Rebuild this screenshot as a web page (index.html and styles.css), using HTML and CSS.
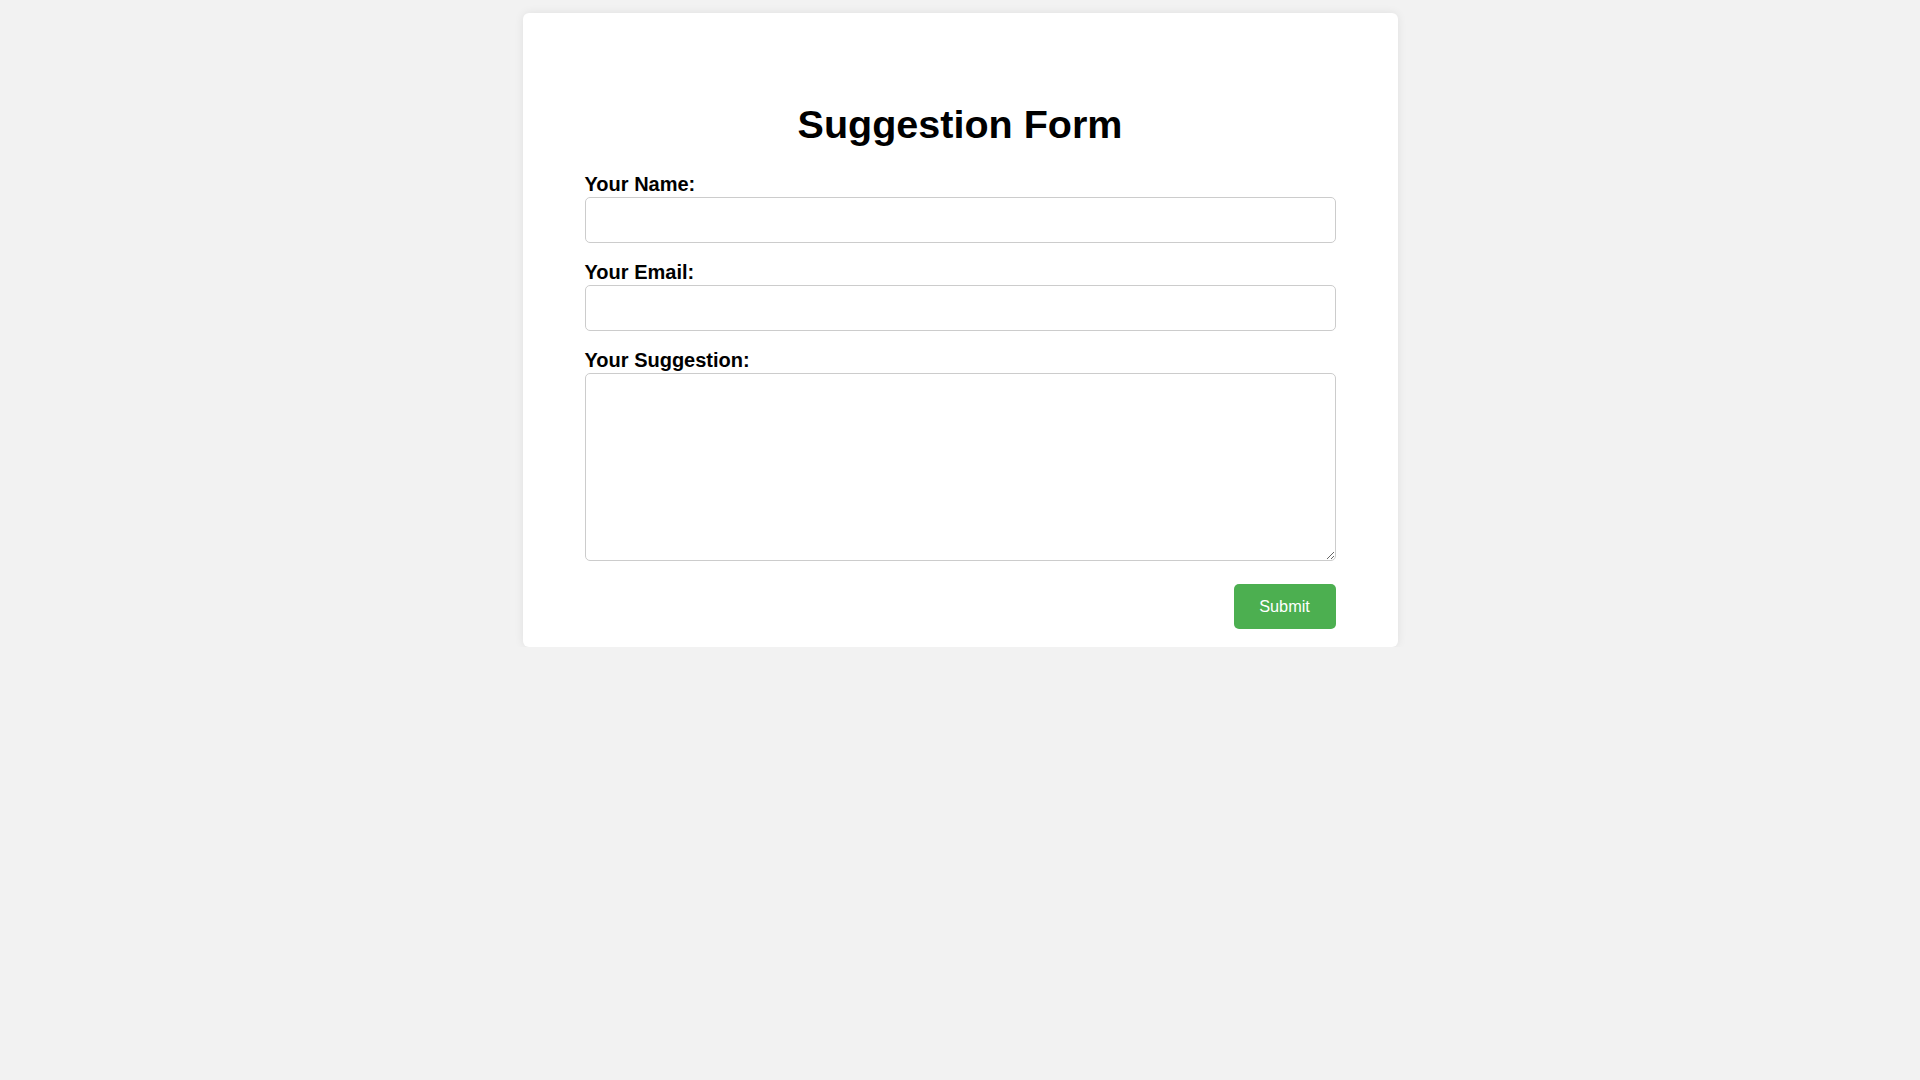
FILE: index.html
```html
<!DOCTYPE html>
<html lang="en">
<head>
<meta charset="utf-8">
<title>Suggestion Form</title>
<link rel="stylesheet" href="styles.css">
</head>
<body>
<div class="card">
  <h1 class="title">Suggestion Form</h1>
  <form class="form">
    <label class="label" for="name">Your Name:</label>
    <input class="field" type="text" id="name">
    <label class="label gap" for="email">Your Email:</label>
    <input class="field" type="email" id="email">
    <label class="label gap" for="suggestion">Your Suggestion:</label>
    <textarea class="area" id="suggestion"></textarea>
    <div class="actions">
      <button class="submit" type="button">Submit</button>
    </div>
  </form>
</div>
</body>
</html>
```
FILE: styles.css
```css
html, body {
  margin: 0;
  padding: 0;
}
body {
  background: #f2f2f2;
  font-family: "Liberation Sans", Arial, sans-serif;
  color: #000;
}
.card {
  box-sizing: border-box;
  width: 875px;
  margin: 13px auto 0;
  padding: 88px 62px 17.7px;
  background: #fff;
  border-radius: 6px;
  box-shadow: 0 0 10px rgba(0, 0, 0, 0.08);
}
.title {
  margin: 0 0 26px;
  font-size: 39.5px;
  line-height: 46px;
  font-weight: bold;
  text-align: center;
}
.form {
  display: flex;
  flex-direction: column;
}
.label {
  font-size: 20px;
  line-height: 22px;
  font-weight: bold;
  margin-bottom: 2px;
}
.label.gap {
  margin-top: 18px;
}
.field,
.area {
  box-sizing: border-box;
  width: 100%;
  margin: 0;
  border: 1px solid #cccccc;
  border-radius: 5px;
  background: #fff;
  font-family: "Liberation Sans", Arial, sans-serif;
  font-size: 16px;
  padding: 6px 12px;
  outline: none;
}
.field {
  height: 46px;
}
.area {
  display: block;
  height: 188px;
  resize: vertical;
}
.actions {
  display: flex;
  justify-content: flex-end;
  margin-top: 23.3px;
}
.submit {
  width: 102px;
  height: 45px;
  border: none;
  border-radius: 5px;
  background: #4caf50;
  color: #fff;
  font-family: "Liberation Sans", Arial, sans-serif;
  font-size: 16.3px;
  cursor: pointer;
}
```
